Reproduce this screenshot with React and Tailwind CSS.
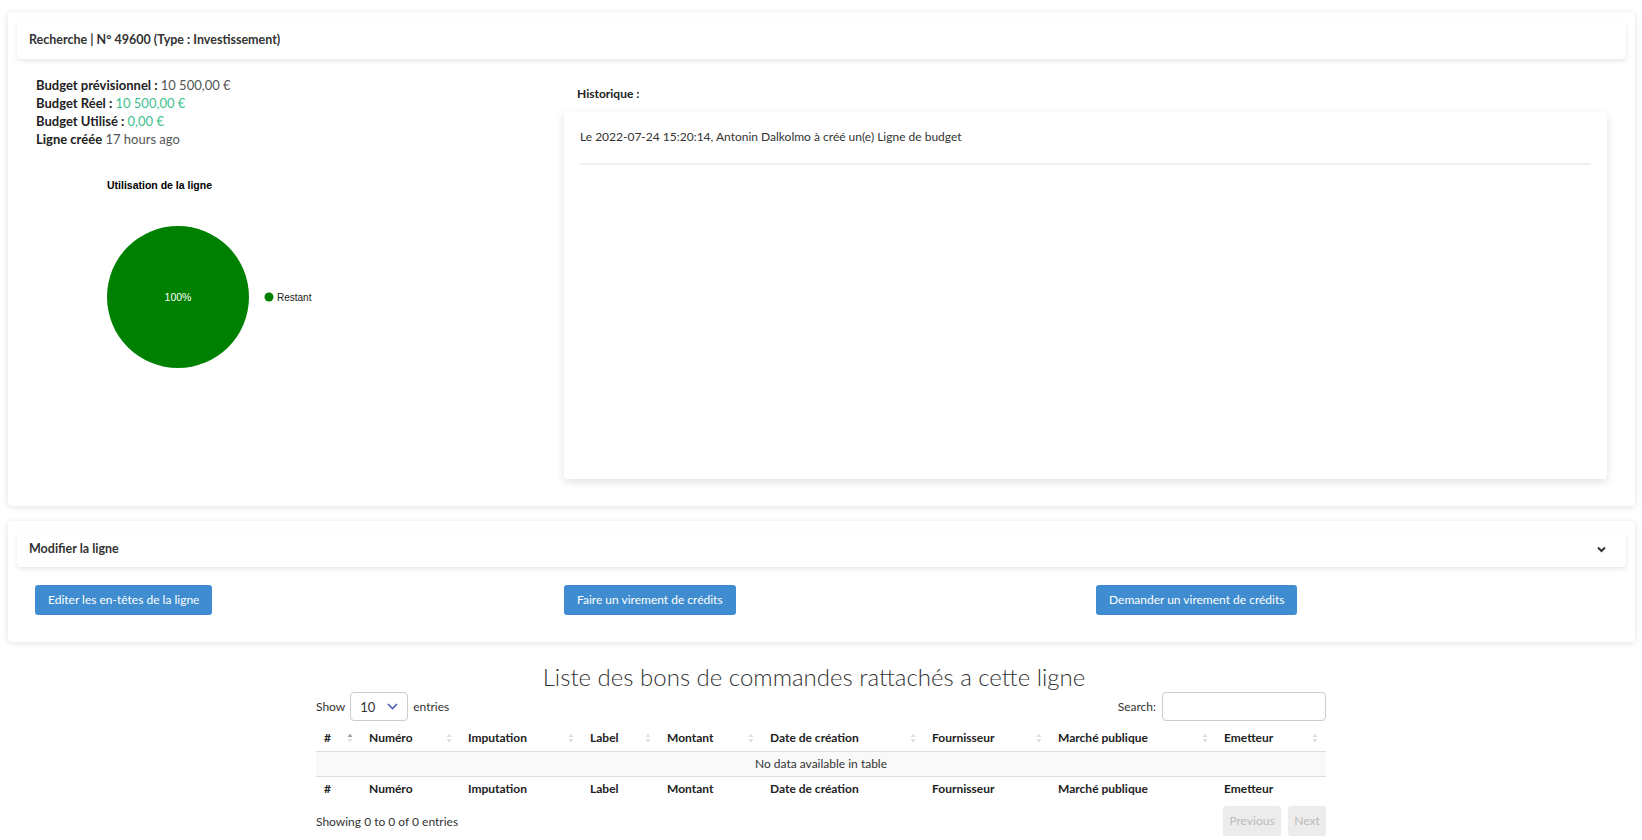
import React from "react";

const font = { fontFamily: "Lato, 'Open Sans', sans-serif" };
const nb = "\u202F";

function SortIcon({ active }) {
  return (
    <svg width="6" height="10" viewBox="0 0 6 10" className="shrink-0">
      <path d="M3 0.5 L5.5 4 L0.5 4 Z" fill={active ? "#9ca3af" : "#e0e0e0"} />
      <path d="M3 9.5 L5.5 6 L0.5 6 Z" fill="#e0e0e0" />
    </svg>
  );
}

function Chevron() {
  return (
    <svg width="9" height="7" viewBox="0 0 9 7" fill="none">
      <path d="M1 1.5 L4.5 5 L8 1.5" stroke="#333" strokeWidth="2" />
    </svg>
  );
}

function PieChart() {
  return (
    <svg width="420" height="260" className="block">
      <text x="71" y="29" fontFamily="Arial, 'Liberation Sans', sans-serif" fontSize="10.5" fontWeight="bold" fill="#000">
        Utilisation de la ligne
      </text>
      <circle cx="142" cy="137" r="71" fill="#008000" />
      <text x="142" y="141" textAnchor="middle" fontFamily="Arial, 'Liberation Sans', sans-serif" fontSize="10.5" fill="#fff">
        100%
      </text>
      <circle cx="233" cy="137" r="4.5" fill="#008000" />
      <text x="241" y="141" fontFamily="Arial, 'Liberation Sans', sans-serif" fontSize="10" fill="#222">
        Restant
      </text>
    </svg>
  );
}

const columns = [
  ["#", 45],
  ["Numéro", 99],
  ["Imputation", 122],
  ["Label", 77],
  ["Montant", 103],
  ["Date de création", 162],
  ["Fournisseur", 126],
  ["Marché publique", 166],
  ["Emetteur", 110],
];

export default function App() {
  return (
    <div className="min-h-[840px] bg-white text-[#212529]" style={font}>
      {/* fiche ligne */}
      <div className="ml-[8px] mr-[7px] mt-[12px] rounded bg-white pt-[10px] pb-[27px] shadow-[0_1px_6px_rgba(0,0,0,0.12)]">
        <div className="mx-[9px] flex h-[37px] items-center rounded bg-white px-[12px] text-[12.5px] font-bold text-[#333] shadow-[0_2px_4px_rgba(0,0,0,0.1)]">
          Recherche | N° 49600 (Type : Investissement)
        </div>
        <div className="flex pl-[28px] pr-[28px] pt-[17px]">
          <div className="w-[528px] shrink-0">
            <div className="text-[13px] leading-[18px] text-[#555]">
              <div>
                <span className="font-bold text-[#222]">Budget prévisionnel : </span>10{nb}500,00 €
              </div>
              <div>
                <span className="font-bold text-[#222]">Budget Réel : </span>
                <span className="text-[#3dc08e]">10{nb}500,00 €</span>
              </div>
              <div>
                <span className="font-bold text-[#222]">Budget Utilisé : </span>
                <span className="text-[#3dc08e]">0,00 €</span>
              </div>
              <div>
                <span className="font-bold text-[#222]">Ligne créée</span> 17 hours ago
              </div>
            </div>
            <div className="mt-[12px]">
              <PieChart />
            </div>
          </div>
          <div className="flex flex-1 flex-col">
            <div className="pl-[13px] pt-[9px] text-[12px] font-bold leading-[18px] text-[#222]">Historique :</div>
            <div className="mt-[9px] h-[367px] rounded bg-white px-[16px] pt-[16px] shadow-[0_3px_10px_rgba(0,0,0,0.12)]">
              <div className="text-[12px] leading-[18px] text-[#333]">
                Le 2022-07-24 15:20:14, Antonin Dalkolmo à créé un(e) Ligne de budget
              </div>
              <div className="mt-[17px] h-[2px] bg-[#f0f0f0]" />
            </div>
          </div>
        </div>
      </div>

      {/* modifier la ligne */}
      <div className="ml-[8px] mr-[7px] mt-[15px] rounded bg-white pt-[10px] pb-[27px] shadow-[0_1px_6px_rgba(0,0,0,0.12)]">
        <div className="mx-[9px] flex h-[36px] items-center justify-between rounded bg-white pl-[12px] pr-[20px] text-[12.5px] font-bold text-[#333] shadow-[0_2px_4px_rgba(0,0,0,0.1)]">
          <span>Modifier la ligne</span>
          <Chevron />
        </div>
        <div className="mt-[18px] grid grid-cols-[529px_532px_1fr] pl-[27px]">
          <div>
            <button className="h-[30px] rounded-[3px] bg-[#3f8dd0] px-[13px] text-[12px] text-white">
              Editer les en-têtes de la ligne
            </button>
          </div>
          <div>
            <button className="h-[30px] rounded-[3px] bg-[#3f8dd0] px-[13px] text-[12px] text-white">
              Faire un virement de crédits
            </button>
          </div>
          <div>
            <button className="h-[30px] rounded-[3px] bg-[#3f8dd0] px-[13px] text-[12px] text-white">
              Demander un virement de crédits
            </button>
          </div>
        </div>
      </div>

      {/* liste des bons de commande */}
      <div className="mt-[20px] pr-[14px] text-center text-[24px] font-light leading-[30px] text-[#333]">
        Liste des bons de commandes rattachés a cette ligne
      </div>
      <div className="mx-auto w-[1010px] text-[12px] text-[#333]">
        <div className="flex items-center justify-between">
          <div className="flex items-center">
            <span>Show</span>
            <div className="mx-[5px] flex h-[29px] w-[58px] items-center justify-between rounded-[4px] border border-[#ccc] pl-[9px] pr-[9px]">
              <span className="mt-[2px] text-[13px]">10</span>
              <svg width="11" height="7" viewBox="0 0 11 7" fill="none">
                <path d="M1 1 L5.5 5.5 L10 1" stroke="#4a5dbb" strokeWidth="1.6" />
              </svg>
            </div>
            <span>entries</span>
          </div>
          <div className="flex items-center">
            <span>Search:</span>
            <div className="ml-[6px] h-[29px] w-[164px] rounded-[4px] border border-[#ccc]" />
          </div>
        </div>
        <table className="mt-[5px] w-full table-fixed border-collapse text-[12px]">
          <colgroup>
            {columns.map(([name, w]) => (
              <col key={name} style={{ width: w }} />
            ))}
          </colgroup>
          <thead>
            <tr className="h-[25px] border-b border-[#ddd]">
              {columns.map(([name], i) => (
                <th key={name} className="px-[8px] text-left font-bold text-[#222]">
                  <div className="flex items-center justify-between">
                    <span>{name}</span>
                    <SortIcon active={i === 0} />
                  </div>
                </th>
              ))}
            </tr>
          </thead>
          <tbody>
            <tr className="h-[25px] bg-[#f9f9f9]">
              <td colSpan={9} className="text-center text-[#333]">
                No data available in table
              </td>
            </tr>
          </tbody>
          <tfoot>
            <tr className="h-[26px] border-t border-[#ddd]">
              {columns.map(([name]) => (
                <th key={name} className="px-[8px] text-left font-bold text-[#222]">
                  {name}
                </th>
              ))}
            </tr>
          </tfoot>
        </table>
        <div className="mt-[4px] flex items-center justify-between">
          <span className="mt-[2px]">Showing 0 to 0 of 0 entries</span>
          <div className="flex gap-[7px]">
            <div className="flex h-[30px] w-[58px] items-center justify-center rounded-[3px] bg-[#ececec] text-[#bbb]">
              Previous
            </div>
            <div className="flex h-[30px] w-[38px] items-center justify-center rounded-[3px] bg-[#ececec] text-[#bbb]">
              Next
            </div>
          </div>
        </div>
      </div>
    </div>
  );
}
